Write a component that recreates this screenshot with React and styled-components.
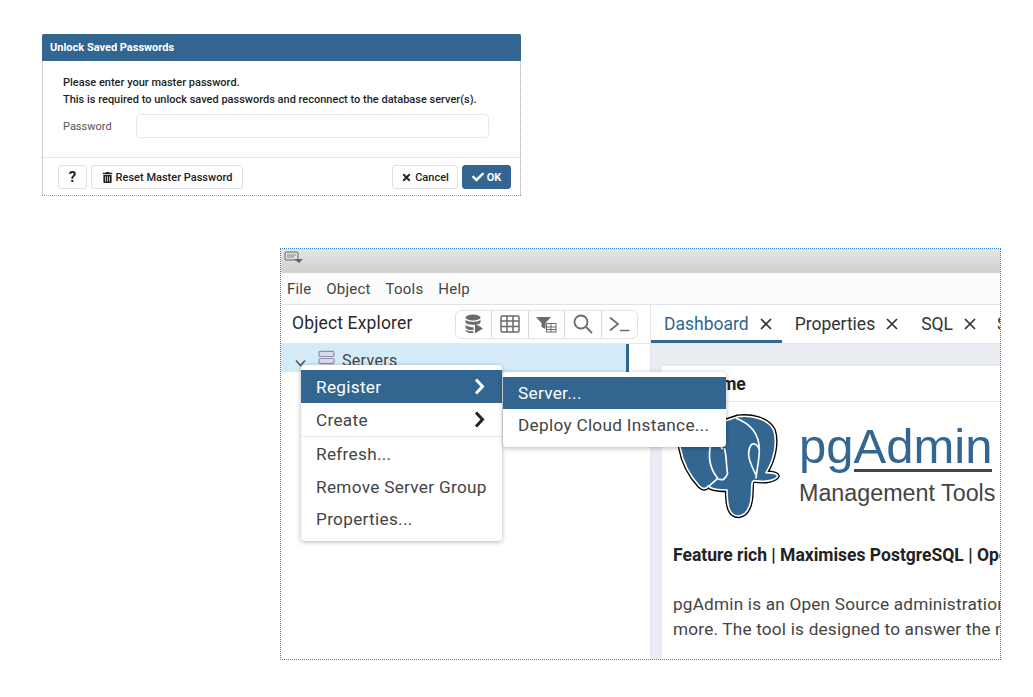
import React from 'react';
import styled, { createGlobalStyle } from 'styled-components';
import { FaCheck, FaTimes, FaTrashAlt } from 'react-icons/fa';

const Global = createGlobalStyle`
  *, *::before, *::after { box-sizing: border-box; }
  html, body { margin: 0; padding: 0; background: #fff; }
  body { font-family: Roboto, "Liberation Sans", sans-serif; color: #222; }
`;
const Page = styled.div`
  width: 1033px; height: 697px; overflow: hidden;
  display: flex; flex-direction: column; align-items: flex-start;
  padding: 34px 0 0 42px;
`;
/* Dialog */
const Dialog = styled.section`
  width: 479px; height: 162px; display: flex; flex-direction: column;
  border: 1px dotted #9a9a9a; border-top: 0; border-radius: 2px 2px 0 0;
`;
const DialogTitle = styled.header`
  height: 27px; margin: 0 -1px; background: #326690; color: #fff; font-size: 11px; font-weight: 700;
  display: flex; align-items: center; padding-left: 8px; border-radius: 2px 2px 0 0;
`;
const DialogBody = styled.div`
  flex: 1; padding: 13px 31px 0 20px; font-size: 11px; line-height: 17px; color: #1f1f1f; font-weight: 500;
  p { margin: 0; }
`;
const Field = styled.div`
  display: grid; grid-template-columns: 73px 353px; align-items: center; margin-top: 6px;
`;
const FieldLabel = styled.label` color: #555; font-size: 11px; font-weight: 400; `;
const PasswordInput = styled.input`
  height: 24px; border: 1px solid #e6e9ee; border-radius: 4px; background: #fff; outline: none;
`;
const DialogFooter = styled.footer`
  height: 38px; border-top: 1px solid #e6e9ee; display: flex; align-items: flex-start;
  padding: 7px 9px 0 15px; gap: 4px;
`;
const Button = styled.button`
  height: 24px; padding: 0; width: ${p => p.$w}px; border-radius: 3px;
  border: 1px solid ${p => (p.$primary ? '#326690' : '#dde1e6')};
  background: ${p => (p.$primary ? '#326690' : '#fff')};
  color: ${p => (p.$primary ? '#fff' : '#222')};
  font: ${p => (p.$primary ? 700 : 500)} ${p => p.$size || 11}px Roboto, sans-serif;
  display: inline-flex; align-items: center; justify-content: center; gap: 3px;
  svg { font-size: ${p => (p.$primary ? 12 : 11)}px; }
`;
const Spacer = styled.div` flex: 1; `;
/* Window */
const Window = styled.section`
  margin: 52px 0 0 238px; width: 721px; height: 412px;
  border: 1px dotted #2f7fcb; overflow: hidden; display: flex; flex-direction: column; position: relative; flex: none;
`;
const TitleBar = styled.div`
  height: 24px; flex: none; background: linear-gradient(#e6e6e6, #cfcfcf); display: flex; align-items: flex-start; padding: 2px 0 0 3px;
`;
const MenuBar = styled.nav`
  height: 32px; flex: none; background: #fcfcfc; border-bottom: 1px solid #dfe3e8; display: flex; align-items: center;
  padding-left: 6px; gap: 15px; font-size: 15px; color: #444; letter-spacing: .2px;
`;
const Panes = styled.div` flex: 1; min-height: 0; display: flex; `;
const LeftPane = styled.div` width: 369px; flex: none; display: flex; flex-direction: column; `;
const ExplorerHead = styled.div`
  height: 39px; flex: none; display: flex; align-items: center; justify-content: space-between; padding: 0 12px 0 11px;
  border-bottom: 1px solid #e6e9ee;
`;
const ExplorerTitle = styled.h2` margin: 0 0 2px; font-size: 17.5px; font-weight: 400; color: #2a2a2a; letter-spacing: .15px; `;
const ToolGroup = styled.div`
  display: flex; height: 29px; border: 1px solid #dfe3e8; border-radius: 6px; width: 183px;
`;
const ToolButton = styled.span`
  flex: 1; display: flex; align-items: center; justify-content: center; color: #666;
  & + & { border-left: 1px solid #d4d9df; }
`;
const TreeRow = styled.div`
  height: 28px; width: 348px; background: #d4ecf9; border-right: 3px solid #326690;
  display: flex; align-items: center; gap: 0; padding: 5px 0 0 14px; font-size: 16px; color: #444; letter-spacing: .3px;
`;
const RightPane = styled.div` flex: 1; min-width: 0; display: flex; flex-direction: column; border-left: 1px solid #e3e6ea; `;
const Tabs = styled.div`
  height: 39px; flex: none; display: flex; border-bottom: 1px solid #e6e9ee; font-size: 17.5px; white-space: nowrap;
`;
const Tab = styled.div`
  display: flex; align-items: center; gap: 10px; padding: 2px 9px 0 ${p => p.$pl || 13}px; height: 38px; flex: none;
  color: ${p => (p.$active ? '#326690' : '#333')};
  border-bottom: 3px solid ${p => (p.$active ? '#326690' : 'transparent')};
  svg { color: #333; }
`;
const Content = styled.div` flex: 1; min-height: 0; background: #e9ecf1; padding: 21px 0 0 11px; overflow: hidden; `;
const Card = styled.article` width: 700px; height: 100%; background: #fff; border-top: 1px solid #e4e7eb; `;
const CardHead = styled.h3`
  margin: 0; height: 36px; border-bottom: 1px solid #e4e7eb; font-size: 17.5px; font-weight: 700;
  display: flex; align-items: center; padding: 0 0 0 11px; color: #222;
`;
const LogoRow = styled.div` display: flex; padding: 8px 0 0 9px; height: 115px; `;
const LogoText = styled.div`
  margin-left: 8px; font-family: "Liberation Sans", Arial, sans-serif; display: flex; flex-direction: column;
`;
const Brand = styled.div`
  font-size: 49px; height: 56px; line-height: 56px; color: #336791; margin-top: 8px;
  span { display: inline-block; border-bottom: 3px solid #444; line-height: 46px; }
`;
const Sub = styled.div` font-size: 23.3px; line-height: 28px; color: #444; margin-top: 5px; white-space: nowrap; `;
const Feature = styled.p` margin: 26px 0 0 11px; font-size: 17.5px; line-height: 24px; font-weight: 700; color: #222; white-space: nowrap; `;
const Para = styled.p` margin: 25px 0 0 11px; font-size: 17.2px; line-height: 25px; color: #444; white-space: nowrap; letter-spacing: .2px; `;
/* Menus */
const Menu = styled.div`
  position: absolute; left: ${p => p.$x}px; top: ${p => p.$y}px; width: ${p => p.$w}px; padding: 5px 0 6px;
  background: #fff; border-radius: 4px; box-shadow: 0 1px 5px rgba(0,0,0,.3); z-index: ${p => p.$z};
`;
const MenuItem = styled.div`
  height: ${p => p.$h || 33}px; display: flex; align-items: center; justify-content: space-between; white-space: nowrap;
  padding: 0 17px 0 15px; font-size: 17.2px; letter-spacing: .3px;
  background: ${p => (p.$on ? '#326690' : '#fff')}; color: ${p => (p.$on ? '#fff' : '#444')};
  border-bottom: ${p => (p.$sep ? '1px solid #e3e6ea' : '0')};
`;

const Chevron = ({ color }) => (
  <svg width="11" height="17" viewBox="0 0 11 17"><path d="M2 1.500 L8.500 8.500 L2 15.500" fill="none" stroke={color} strokeWidth="3" /></svg>
);
const Close = () => (
  <svg width="14" height="14" viewBox="0 0 14 14"><path d="M2 2 L12 12 M12 2 L2 12" stroke="currentColor" strokeWidth="1.7" /></svg>
);
const TitleIcon = () => (
  <svg width="19" height="13" viewBox="0 0 19 13">
    <rect x="1" y="1" width="13" height="8" rx="1" fill="#ddd" stroke="#666" />
    <path d="M3 4h9M3 6h7" stroke="#888" />
    <path d="M10 8h9l-4 4z" fill="#666" />
  </svg>
);
const DbIcon = () => (
  <svg width="20" height="20" viewBox="0 0 20 20" fill="#6b6b6b">
    <ellipse cx="9" cy="3.500" rx="7.500" ry="3" />
    <path d="M1.500 5.500c1 3 14 3 15 0v3c-1 3-14 3-15 0z" />
    <path d="M1.500 10.500c1 2 6 3 8 2.700V16c-3 .4-7-.3-8-2.200z" />
    <path d="M1.500 15.500c1 1 4 2 8 1.700v1.800c-3 .3-7-.5-8-2z" />
    <path d="M11 9.500 L19 14.500 L11 19.500z" />
  </svg>
);
const TableIcon = () => (
  <svg width="20" height="18" viewBox="0 0 20 18" fill="none" stroke="#6b6b6b" strokeWidth="1.500">
    <rect x="1" y="1" width="18" height="16" rx="1.500" />
    <path d="M1 6h18M1 11.500h18M7 1v16M13 1v16" />
  </svg>
);
const FilterTableIcon = () => (
  <svg width="21" height="17" viewBox="0 0 21 17">
    <path d="M0 1h15l-5.500 6v6l-4-2V7z" fill="#6b6b6b" />
    <rect x="10.500" y="7.500" width="9.500" height="8.500" fill="#fff" stroke="#6b6b6b" />
    <path d="M10.500 11h9.500M15 7.500v8.500M10.500 13.500h9.500" stroke="#6b6b6b" />
  </svg>
);
const SearchIcon = () => (
  <svg width="20" height="20" viewBox="0 0 20 20" fill="none" stroke="#6b6b6b" strokeWidth="1.800">
    <circle cx="8" cy="8" r="6.500" /><path d="M13 13l6 6" />
  </svg>
);
const ConsoleIcon = () => (
  <svg width="21" height="16" viewBox="0 0 21 16" fill="none" stroke="#6b6b6b" strokeWidth="1.700">
    <path d="M1 1.500l8 6.500-8 6.500M11 14.500h9.500" />
  </svg>
);
const ServerIcon = () => (
  <svg width="17" height="15" viewBox="0 0 18 15" fill="#d9d9ea" stroke="#8c8ca6" strokeWidth="1.200" style={{ margin: '-7px 7px 0 12px' }}>
    <rect x="1" y="1" width="16" height="5.500" rx="1.500" /><rect x="1" y="8.500" width="16" height="5.500" rx="1.500" />
  </svg>
);
const TreeChevron = () => (
  <svg width="11" height="8" viewBox="0 0 11 8" style={{ marginTop: 5 }}><path d="M1 1.500l4.500 5 4.500-5" fill="none" stroke="#555" strokeWidth="1.600" /></svg>
);
const ELEPHANT = 'M20 80 L200 20 C240 15 290 25 308 60 C320 95 310 150 285 188 C300 188 318 190 320 198 C315 210 285 218 250 212 C243 212 242 220 242 240 C242 280 235 312 205 318 C175 320 168 290 168 240 C150 240 120 240 112 228 C105 238 95 238 85 228 C55 195 35 155 28 115 Z';
const Elephant = () => (
  <svg width="120" height="115" viewBox="0 0 360 345">
    <path d={ELEPHANT} fill="#000" stroke="#000" strokeWidth="13" strokeLinejoin="round" />
    <path d={ELEPHANT} fill="#336791" stroke="#fff" strokeWidth="5" strokeLinejoin="round" />
    <path d="M195 25C235 40 265 70 265 120C265 150 258 175 255 205M240 105C225 130 235 155 255 195M240 105C250 97 262 105 265 120M118 110C110 150 120 180 140 205C155 215 165 205 170 190M160 115C168 140 165 170 170 190M140 205C130 215 122 220 115 228M150 112L155 118" fill="none" stroke="#fff" strokeWidth="5" />
  </svg>
);

export default function App() {
  return (
    <Page>
      <Global />
      <Dialog>
        <DialogTitle>Unlock Saved Passwords</DialogTitle>
        <DialogBody>
          <p>Please enter your master password.</p>
          <p>This is required to unlock saved passwords and reconnect to the database server(s).</p>
          <Field>
            <FieldLabel>Password</FieldLabel>
            <PasswordInput type="password" />
          </Field>
        </DialogBody>
        <DialogFooter>
          <Button $w={29} $size={15}><b>?</b></Button>
          <Button $w={152}><FaTrashAlt />Reset Master Password</Button>
          <Spacer />
          <Button $w={66}><FaTimes />Cancel</Button>
          <Button $w={49} $primary><FaCheck />OK</Button>
        </DialogFooter>
      </Dialog>

      <Window>
        <TitleBar><TitleIcon /></TitleBar>
        <MenuBar>
          <span>File</span><span>Object</span><span>Tools</span><span>Help</span>
        </MenuBar>
        <Panes>
          <LeftPane>
            <ExplorerHead>
              <ExplorerTitle>Object Explorer</ExplorerTitle>
              <ToolGroup>
                <ToolButton><DbIcon /></ToolButton>
                <ToolButton><TableIcon /></ToolButton>
                <ToolButton><FilterTableIcon /></ToolButton>
                <ToolButton><SearchIcon /></ToolButton>
                <ToolButton><ConsoleIcon /></ToolButton>
              </ToolGroup>
            </ExplorerHead>
            <TreeRow><TreeChevron /><ServerIcon />Servers</TreeRow>
          </LeftPane>
          <RightPane>
            <Tabs>
              <Tab $active>Dashboard <Close /></Tab>
              <Tab>Properties <Close /></Tab>
              <Tab>SQL <Close /></Tab>
              <Tab $pl={11}>Statistics <Close /></Tab>
            </Tabs>
            <Content>
              <Card>
                <CardHead>Welcome</CardHead>
                <LogoRow>
                  <Elephant />
                  <LogoText>
                    <Brand>pg<span>Admin</span></Brand>
                    <Sub>Management Tools for PostgreSQL</Sub>
                  </LogoText>
                </LogoRow>
                <Feature>Feature rich | Maximises PostgreSQL | Open Source</Feature>
                <Para>pgAdmin is an Open Source administration and management tool for the PostgreSQL database.<br />more. The tool is designed to answer the needs of developers, DBAs and system administrators alike.</Para>
              </Card>
            </Content>
          </RightPane>
        </Panes>
        <Menu $x={20} $y={116} $w={201} $z={2}>
          <MenuItem $on>Register <Chevron color="#fff" /></MenuItem>
          <MenuItem $sep $h={34}>Create <Chevron color="#222" /></MenuItem>
          <MenuItem>Refresh...</MenuItem>
          <MenuItem>Remove Server Group</MenuItem>
          <MenuItem $h={32}>Properties...</MenuItem>
        </Menu>
        <Menu $x={222} $y={123} $w={223} $z={3}>
          <MenuItem $on $h={32}>Server...</MenuItem>
          <MenuItem $h={32}>Deploy Cloud Instance...</MenuItem>
        </Menu>
      </Window>
    </Page>
  );
}
